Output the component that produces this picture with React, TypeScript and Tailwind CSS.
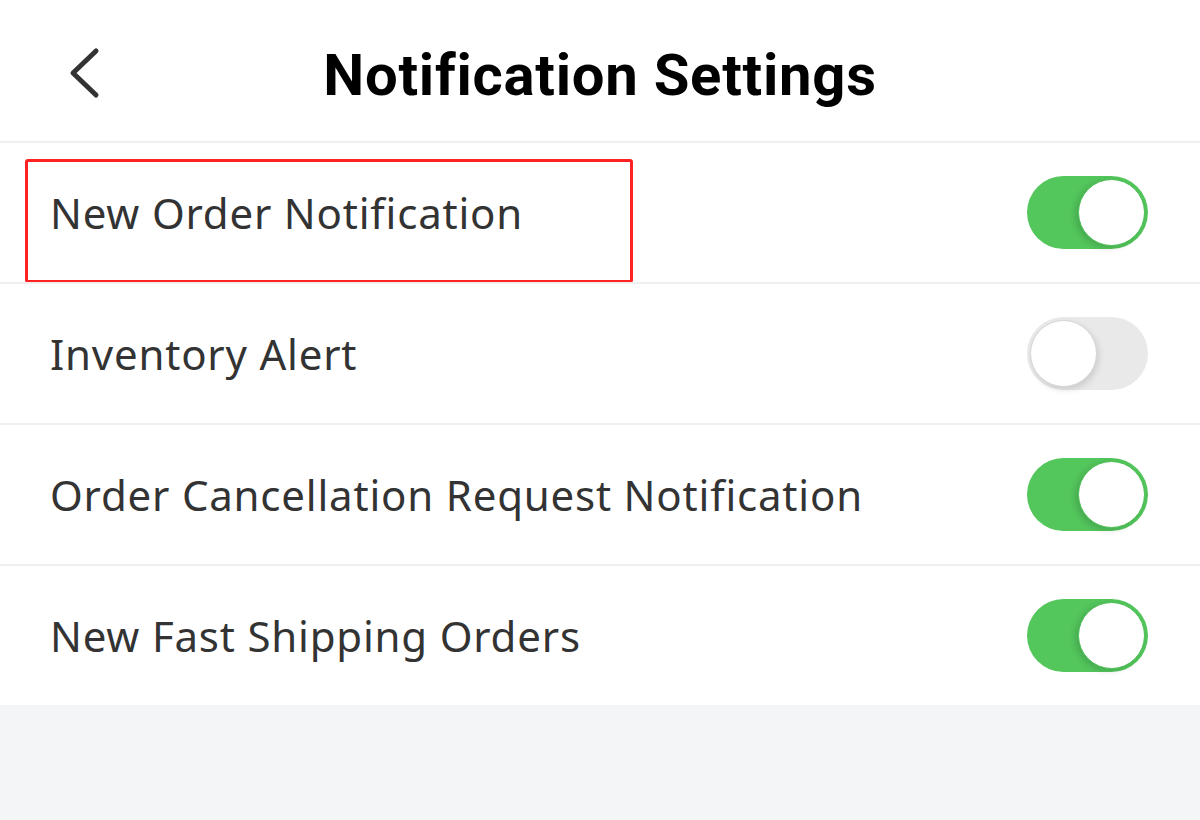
import { useState } from 'react';

const items = [
  { id: 'new-order', label: 'New Order Notification', on: true, highlight: true },
  { id: 'inventory', label: 'Inventory Alert', on: false },
  { id: 'cancel', label: 'Order Cancellation Request Notification', on: true },
  { id: 'fast', label: 'New Fast Shipping Orders', on: true },
];

function Toggle({ on, onClick }: { on: boolean; onClick: () => void }) {
  return (
    <button
      onClick={onClick}
      className={
        'flex h-[73px] w-[121px] items-center rounded-full p-[3px] ' +
        (on ? 'justify-end bg-[#53c65c]' : 'justify-start bg-[#e9e9e9]')
      }
    >
      <span
        className={
          'h-[67px] w-[67px] rounded-full bg-white ' +
          (on
            ? 'border border-[#4cbf55] shadow-[-3px_2px_6px_rgba(0,0,0,0.15)]'
            : 'border border-[#d6d6d6] shadow-[2px_3px_6px_rgba(0,0,0,0.12)]')
        }
      />
    </button>
  );
}

export default function App() {
  const [state, setState] = useState(items.map((i) => i.on));

  return (
    <div
      className="min-h-[820px] w-full bg-[#f4f5f6]"
      style={{ fontFamily: '"Noto Sans", "Open Sans", sans-serif' }}
    >
      {/* Header */}
      <div className="grid h-[141px] grid-cols-[1fr_auto_1fr] items-center bg-white">
        <div className="flex pl-[59px] pt-[8px]">
          <button className="p-1">
            <svg width="40" height="56" viewBox="0 0 40 56" fill="none">
              <path
                d="M33 4 L10 26 L33 48"
                stroke="#333"
                strokeWidth="5"
                strokeLinecap="round"
                strokeLinejoin="round"
              />
            </svg>
          </button>
        </div>
        <h1
          className="pt-[9px] text-[58px] font-bold tracking-[0.75px] text-black"
          style={{ fontFamily: 'Roboto, "Noto Sans", sans-serif' }}
        >
          Notification Settings
        </h1>
        <div />
      </div>

      {/* Settings list */}
      <div className="bg-white">
        {items.map((item, i) => (
          <div
            key={item.id}
            className="relative flex h-[141px] items-center justify-between border-t-2 border-[#f0f0f0] pl-[50px] pr-[52px]"
          >
            {item.highlight && (
              <div className="pointer-events-none absolute left-[25px] top-[16px] h-[124px] w-[608px] rounded-[3px] border-[3px] border-[#ff2222]" />
            )}
            <span className="text-[42px] tracking-[0.8px] text-[#333]">{item.label}</span>
            <Toggle
              on={state[i]}
              onClick={() => setState((s) => s.map((v, j) => (j === i ? !v : v)))}
            />
          </div>
        ))}
      </div>
    </div>
  );
}
